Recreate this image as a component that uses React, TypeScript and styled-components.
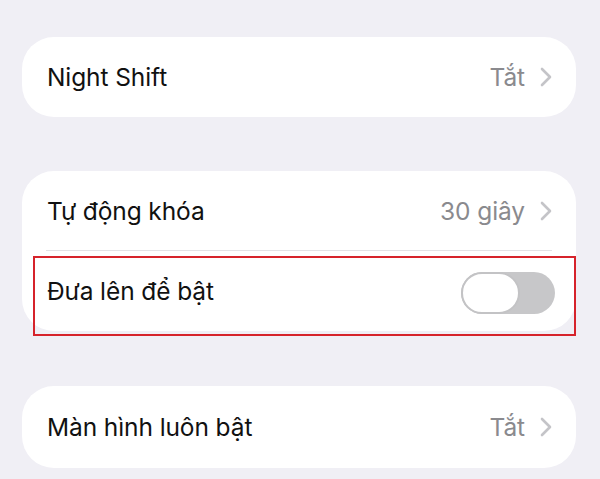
import React from "react";
import styled, { createGlobalStyle } from "styled-components";

const Global = createGlobalStyle`
  html, body { margin: 0; padding: 0; background: #f0eff5; }
  body { font-family: Inter, "Noto Sans", sans-serif; -webkit-font-smoothing: antialiased; }
`;

const Page = styled.div`
  width: 600px;
  height: 479px;
  overflow: hidden;
  background: #f0eff5;
  padding: 37px 24px 0 22px;
  box-sizing: border-box;
  display: flex;
  flex-direction: column;
`;

const Card = styled.div<{ $gap: number }>`
  background: #ffffff;
  border-radius: 32px;
  margin-top: ${(p) => p.$gap}px;
  display: flex;
  flex-direction: column;
`;

const Row = styled.div<{ $divider?: boolean; $h?: number }>`
  position: relative;
  height: ${(p) => p.$h ?? 80}px;
  display: flex;
  align-items: center;
  justify-content: space-between;
  padding: 0 24px 0 25px;
  box-sizing: border-box;
  &::after {
    content: "";
    display: ${(p) => (p.$divider ? "block" : "none")};
    position: absolute;
    left: 24px;
    right: 24px;
    bottom: 0;
    height: 1.5px;
    background: #e2e2e6;
  }
`;

const Label = styled.span`
  font-size: 24.5px;
  color: #111111;
  letter-spacing: -0.1px;
`;

const Trailing = styled.span`
  display: flex;
  align-items: center;
  gap: 15px;
`;

const Value = styled.span`
  font-size: 24.5px;
  color: #8a8a8e;
  letter-spacing: -0.1px;
`;

const Chevron = () => (
  <svg width="12" height="20" viewBox="0 0 12 20" fill="none">
    <path d="M2 2 L10 10 L2 18" stroke="#c4c4c8" strokeWidth="2.6" strokeLinecap="round" strokeLinejoin="round" />
  </svg>
);

const Track = styled.div`
  width: 94px;
  height: 42px;
  border-radius: 21px;
  background: #c7c7c9;
  display: flex;
  align-items: center;
  margin: 4px -3px 0 0;
`;

const Knob = styled.div`
  width: 59px;
  height: 42px;
  border-radius: 21px;
  background: #ffffff;
  border: 2.5px solid #c3c3c5;
  box-sizing: border-box;
`;

const Highlight = styled.div`
  position: absolute;
  left: 11px;
  top: 5px;
  right: 0;
  bottom: -5px;
  border: 2px solid #d6232b;
  pointer-events: none;
`;

export default function App() {
  return (
    <>
      <Global />
      <Page>
        <Card $gap={0}>
          <Row>
            <Label>Night Shift</Label>
            <Trailing>
              <Value>Tắt</Value>
              <Chevron />
            </Trailing>
          </Row>
        </Card>
        <Card $gap={54}>
          <Row $divider>
            <Label>Tự động khóa</Label>
            <Trailing>
              <Value>30 giây</Value>
              <Chevron />
            </Trailing>
          </Row>
          <Row>
            <Label>Đưa lên để bật</Label>
            <Track>
              <Knob />
            </Track>
            <Highlight />
          </Row>
        </Card>
        <Card $gap={55}>
          <Row $h={82}>
            <Label>Màn hình luôn bật</Label>
            <Trailing>
              <Value>Tắt</Value>
              <Chevron />
            </Trailing>
          </Row>
        </Card>
      </Page>
    </>
  );
}
